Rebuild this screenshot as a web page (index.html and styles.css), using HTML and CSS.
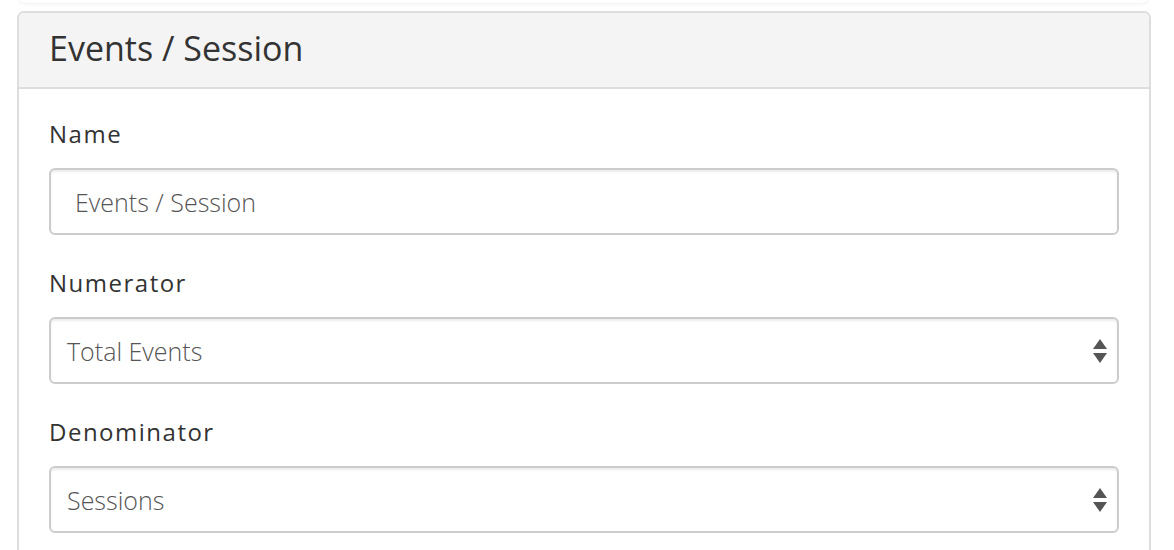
FILE: index.html
```html
<!DOCTYPE html>
<html>
<head>
<meta charset="utf-8">
<link rel="stylesheet" href="styles.css">
</head>
<body>
<div class="prev-card"></div>
<div class="card">
  <div class="card-header">
    <h3 class="card-title">Events / Session</h3>
  </div>
  <div class="card-body">
    <div class="field">
      <label class="field-label">Name</label>
      <div class="control text-control">Events / Session</div>
    </div>
    <div class="field">
      <label class="field-label">Numerator</label>
      <div class="control select-control">
        <span>Total Events</span>
        <svg class="arrows" width="14" height="24" viewBox="0 0 14 24"><path d="M7 0 L14 10 L0 10 Z" fill="#555"/><path d="M0 14 L14 14 L7 24 Z" fill="#555"/></svg>
      </div>
    </div>
    <div class="field">
      <label class="field-label">Denominator</label>
      <div class="control select-control">
        <span>Sessions</span>
        <svg class="arrows" width="14" height="24" viewBox="0 0 14 24"><path d="M7 0 L14 10 L0 10 Z" fill="#555"/><path d="M0 14 L14 14 L7 24 Z" fill="#555"/></svg>
      </div>
    </div>
  </div>
</div>
</body>
</html>
```
FILE: styles.css
```css
* { box-sizing: border-box; }
html, body { margin: 0; padding: 0; background: #fff; }
body {
  font-family: "Open Sans", "Liberation Sans", sans-serif;
  color: #333;
  width: 1174px;
  height: 550px;
  overflow: hidden;
}
.prev-card {
  margin: -20px 24px 0 17px;
  height: 24px;
  border: 1px solid #f4f4f4;
  border-top: none;
  border-radius: 0 0 8px 8px;
  box-shadow: 0 2px 3px rgba(0,0,0,0.025);
}
.card {
  margin: 7px 23px 0 17px;
  border: 2px solid #ddd;
  border-radius: 7px 7px 0 0;
  height: 560px;
}
.card-header {
  background: #f4f4f4;
  border-bottom: 2px solid #ddd;
  border-radius: 5px 5px 0 0;
  height: 76px;
  padding: 0 30px;
  display: flex;
  align-items: center;
}
.card-title {
  margin: 0;
  font-weight: 400;
  font-size: 34px;
  color: #333;
  line-height: 1;
  padding-bottom: 4px;
}
.card-body {
  padding: 28px 30px 0 30px;
}
.field {
  margin-bottom: 31px;
}
.field-label {
  display: block;
  font-size: 24px;
  letter-spacing: 1.5px;
  color: #333;
  line-height: 34px;
  margin-bottom: 17px;
}
.control {
  height: 67px;
  border: 2px solid #ccc;
  border-radius: 6px;
  box-shadow: inset 0 2px 2px rgba(0,0,0,0.075);
  font-size: 25px;
  font-weight: 300;
  color: #555;
  display: flex;
  align-items: center;
}
.text-control { padding-left: 24px; }
.select-control {
  padding-left: 16px;
  padding-right: 10px;
  justify-content: space-between;
}
.arrows { flex: none; }
```
